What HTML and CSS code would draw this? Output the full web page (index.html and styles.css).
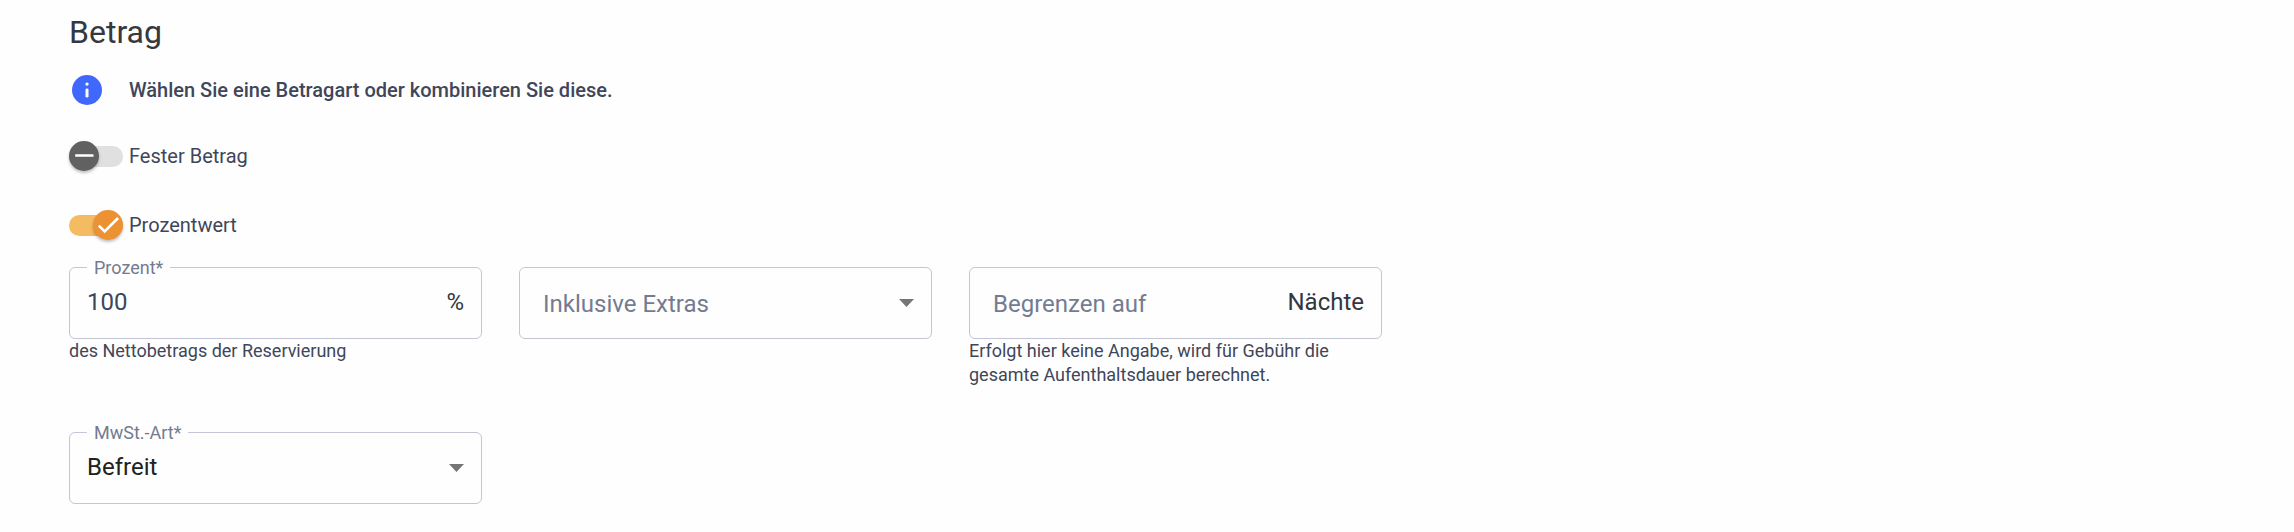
FILE: index.html
```html
<!DOCTYPE html>
<html lang="de">
<head>
  <meta charset="UTF-8">
  <title>Betrag</title>
  <link rel="stylesheet" href="styles.css">
</head>
<body>
  <div class="container">
    <h2>Betrag</h2>

    <div class="info">
      <svg class="info-icon" viewBox="0 0 30 30">
        <circle cx="15" cy="15" r="15" fill="#4068fa"/>
        <circle cx="15" cy="9.1" r="1.7" fill="#fff"/>
        <rect x="13.5" y="13.5" width="3" height="9" rx="1.3" fill="#fff"/>
      </svg>
      <span class="info-text">Wählen Sie eine Betragart oder kombinieren Sie diese.</span>
    </div>

    <div class="toggle">
      <div class="track">
        <svg class="thumb" viewBox="0 0 30 30"><path d="M6.2 14.5h18.3" stroke="#fff" stroke-width="2.4" fill="none"/></svg>
      </div>
      <span class="toggle-label">Fester Betrag</span>
    </div>

    <div class="toggle toggle-on">
      <div class="track">
        <svg class="thumb" viewBox="0 0 30 30"><path d="M5.8 15.6l5.9 5.8L25.1 8" stroke="#fff" stroke-width="2.6" fill="none"/></svg>
      </div>
      <span class="toggle-label">Prozentwert</span>
    </div>

    <div class="fields">
      <div class="field">
        <div class="box">
          <span class="label">Prozent*</span>
          <span class="value">100</span>
          <span class="suffix">%</span>
        </div>
        <div class="hint">des Nettobetrags der Reservierung</div>
      </div>
      <div class="field">
        <div class="box">
          <span class="placeholder">Inklusive Extras</span>
          <span class="arrow"></span>
        </div>
      </div>
      <div class="field">
        <div class="box">
          <span class="placeholder">Begrenzen auf</span>
          <span class="suffix">Nächte</span>
        </div>
        <div class="hint">Erfolgt hier keine Angabe, wird für Gebühr die gesamte Aufenthaltsdauer berechnet.</div>
      </div>
    </div>

    <div class="fields">
      <div class="field">
        <div class="box">
          <span class="label">MwSt.-Art*</span>
          <span class="value selected">Befreit</span>
          <span class="arrow"></span>
        </div>
      </div>
    </div>
  </div>
</body>
</html>
```
FILE: styles.css
```css
* {
  margin: 0;
  padding: 0;
  box-sizing: border-box;
}

body {
  font-family: Roboto, "Liberation Sans", sans-serif;
  background: #fefefe;
  color: #40465a;
}

.container {
  padding: 12px 69px 0;
}

h2 {
  font-size: 32px;
  font-weight: 400;
  line-height: 40px;
  color: #363840;
  margin-bottom: 23px;
}

/* info line */
.info {
  display: flex;
  align-items: center;
  height: 30px;
  padding-left: 3px;
  gap: 27px;
  margin-bottom: 36px;
}

.info-icon {
  width: 30px;
  height: 30px;
}

.info-text {
  font-size: 20px;
  font-weight: 500;
  line-height: 30px;
}

/* toggles */
.toggle {
  display: flex;
  align-items: center;
  height: 30px;
  gap: 6px;
  margin-bottom: 39px;
}

.track {
  display: flex;
  align-items: center;
  width: 54px;
  height: 21px;
  border-radius: 11px;
  background: #e0e0e0;
}

.thumb {
  flex: none;
  width: 30px;
  height: 30px;
  border-radius: 50%;
  background: #616161;
  box-shadow: 0 2px 3px rgba(0, 0, 0, 0.25);
}

.toggle-label {
  font-size: 20px;
  line-height: 30px;
}

.toggle-on {
  margin-bottom: 27px;
}

.toggle-on .track {
  justify-content: flex-end;
  background: #f4bb62;
}

.toggle-on .thumb {
  background: #ec9233;
}

/* form fields */
.fields {
  display: flex;
  gap: 37px;
  margin-bottom: 45px;
}

.field {
  width: 413px;
}

.box {
  position: relative;
  display: flex;
  justify-content: space-between;
  height: 72px;
  padding: 16px 17px 0;
  border: 1px solid #c5c5d8;
  border-radius: 6px;
  font-size: 24px;
  line-height: 36px;
}

.label {
  position: absolute;
  top: -11px;
  left: 17px;
  padding: 0 7px;
  background: #fefefe;
  font-size: 18px;
  line-height: 22px;
  color: #747b91;
}

.selected {
  color: #212121;
}

.placeholder {
  padding: 2px 0 0 6px;
  color: #747b91;
}

.suffix {
  color: #33363f;
}

.arrow {
  margin-top: 15px;
  width: 15px;
  height: 8px;
  background: #757575;
  clip-path: polygon(0 0, 100% 0, 50% 100%);
}

.hint {
  font-size: 18px;
  line-height: 24px;
}
```
